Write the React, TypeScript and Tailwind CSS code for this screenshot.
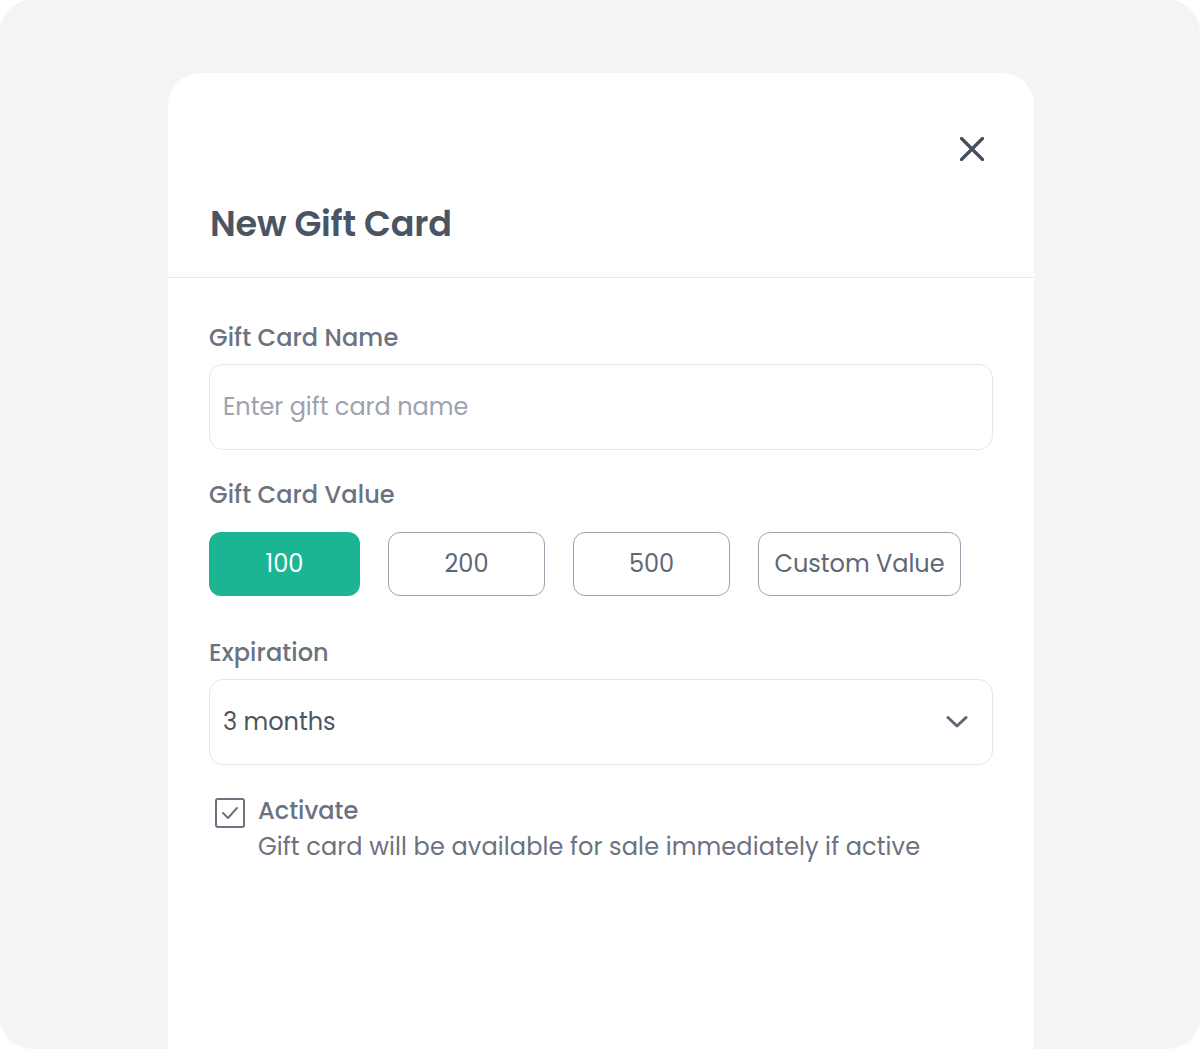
import React from "react";

export default function App() {
  const font = { fontFamily: "Poppins, Inter, 'Noto Sans', sans-serif" };
  return (
    <div className="w-[1200px] h-[1049px] bg-white" style={font}>
      <div className="w-full h-full rounded-[32px] bg-[#f3f4f6] pt-[73px] pl-[168px] pr-[166px] flex overflow-hidden">
        <div className="flex-1 bg-white rounded-t-[32px] flex flex-col">
          <div className="border-b border-[#e5e7eb] px-[42px] pb-[33px]">
            <div className="flex justify-end pt-[64px] pr-[8px]">
              <svg width="24" height="24" viewBox="0 0 24 24" className="text-[#454e5c]">
                <path d="M1.5 1.5L22.5 22.5M22.5 1.5L1.5 22.5" stroke="currentColor" strokeWidth="3.2" strokeLinecap="round" />
              </svg>
            </div>
            <h1 className="mt-[43px] text-[35px] leading-[40px] font-semibold text-[#4a5462] tracking-[-0.2px]">New Gift Card</h1>
          </div>
          <div className="px-[41px] pt-[44px] flex flex-col">
            <label className="text-[24px] leading-[32px] text-[#6b7280] font-medium tracking-[0.1px]">Gift Card Name</label>
            <div className="mt-[10px] h-[86px] rounded-[14px] border border-[#e5e7eb] flex items-center px-[13px]">
              <span className="text-[24px] text-[#9ca3af]">Enter gift card name</span>
            </div>
            <label className="mt-[29px] text-[24px] leading-[32px] text-[#6b7280] font-medium tracking-[0.1px]">Gift Card Value</label>
            <div className="mt-[21px] flex gap-[28px]">
              <div className="w-[151px] h-[64px] rounded-[12px] bg-[#1cb594] text-white flex items-center justify-center text-[24px]">100</div>
              <div className="w-[157px] h-[64px] rounded-[12px] border border-[#9ca3af] text-[#5f6775] flex items-center justify-center text-[24px]">200</div>
              <div className="w-[157px] h-[64px] rounded-[12px] border border-[#9ca3af] text-[#5f6775] flex items-center justify-center text-[24px]">500</div>
              <div className="w-[203px] h-[64px] rounded-[12px] border border-[#9ca3af] text-[#5f6775] flex items-center justify-center text-[24px]">Custom Value</div>
            </div>
            <label className="mt-[41px] text-[24px] leading-[32px] text-[#6b7280] font-medium tracking-[0.1px]">Expiration</label>
            <div className="mt-[10px] h-[86px] rounded-[14px] border border-[#e5e7eb] flex items-center justify-between pl-[13px] pr-[24px]">
              <span className="text-[24px] text-[#4b5563]">3 months</span>
              <svg width="22" height="14" viewBox="0 0 22 14" className="text-[#5f6775]">
                <path d="M2 2.5L11 11L20 2.5" stroke="currentColor" strokeWidth="3" fill="none" strokeLinecap="round" strokeLinejoin="round" />
              </svg>
            </div>
            <div className="mt-[30px] flex gap-[13px] pl-[6px]">
              <div className="mt-[3px] w-[30px] h-[30px] rounded-[3px] border-[2.5px] border-[#6b7280] flex items-center justify-center">
                <svg width="18" height="14" viewBox="0 0 18 14">
                  <path d="M2 7L7 12L16 2" stroke="#6b7280" strokeWidth="2" fill="none" strokeLinecap="round" strokeLinejoin="round" />
                </svg>
              </div>
              <div className="flex flex-col">
                <span className="text-[24px] leading-[32px] text-[#6b7280] font-medium">Activate</span>
                <span className="mt-[4px] text-[24px] leading-[32px] text-[#6b7280] tracking-[0.12px]">Gift card will be available for sale immediately if active</span>
              </div>
            </div>
          </div>
        </div>
      </div>
    </div>
  );
}
